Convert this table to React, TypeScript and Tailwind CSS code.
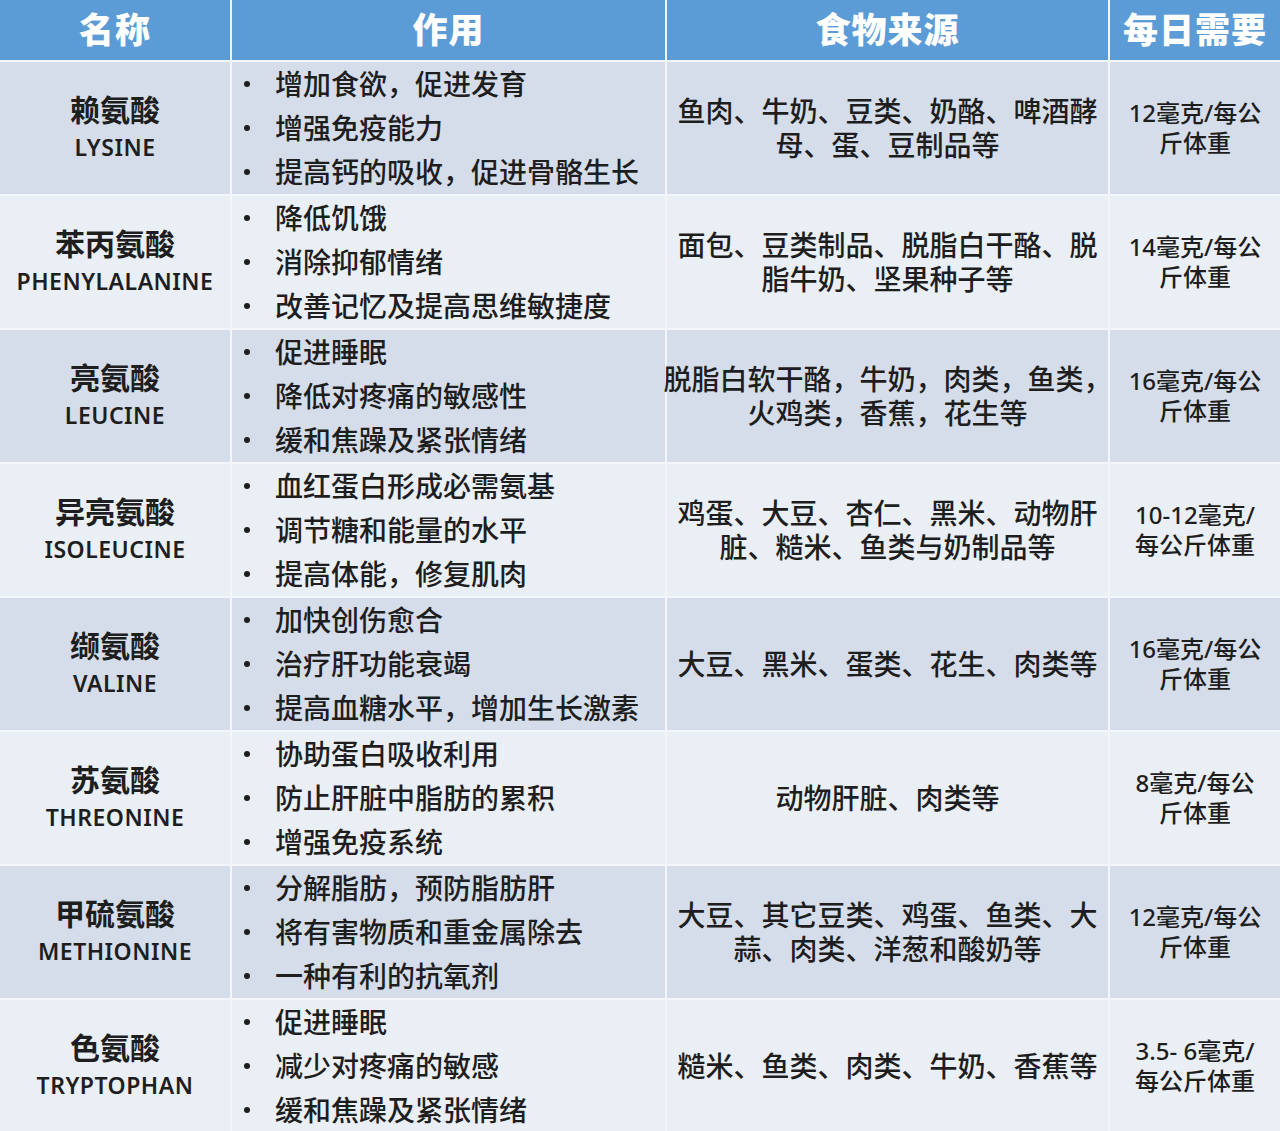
import React from 'react';

interface AminoRow {
  cn: string;
  en: string;
  effects: string[];
  food: string[];
  daily: string[];
}

const rows: AminoRow[] = [
  {
    cn: '赖氨酸',
    en: 'LYSINE',
    effects: ['增加食欲，促进发育', '增强免疫能力', '提高钙的吸收，促进骨骼生长'],
    food: ['鱼肉、牛奶、豆类、奶酪、啤酒酵', '母、蛋、豆制品等'],
    daily: ['12毫克/每公', '斤体重'],
  },
  {
    cn: '苯丙氨酸',
    en: 'PHENYLALANINE',
    effects: ['降低饥饿', '消除抑郁情绪', '改善记忆及提高思维敏捷度'],
    food: ['面包、豆类制品、脱脂白干酪、脱', '脂牛奶、坚果种子等'],
    daily: ['14毫克/每公', '斤体重'],
  },
  {
    cn: '亮氨酸',
    en: 'LEUCINE',
    effects: ['促进睡眠', '降低对疼痛的敏感性', '缓和焦躁及紧张情绪'],
    food: ['脱脂白软干酪，牛奶，肉类，鱼类，', '火鸡类，香蕉，花生等'],
    daily: ['16毫克/每公', '斤体重'],
  },
  {
    cn: '异亮氨酸',
    en: 'ISOLEUCINE',
    effects: ['血红蛋白形成必需氨基', '调节糖和能量的水平', '提高体能，修复肌肉'],
    food: ['鸡蛋、大豆、杏仁、黑米、动物肝', '脏、糙米、鱼类与奶制品等'],
    daily: ['10-12毫克/', '每公斤体重'],
  },
  {
    cn: '缬氨酸',
    en: 'VALINE',
    effects: ['加快创伤愈合', '治疗肝功能衰竭', '提高血糖水平，增加生长激素'],
    food: ['大豆、黑米、蛋类、花生、肉类等'],
    daily: ['16毫克/每公', '斤体重'],
  },
  {
    cn: '苏氨酸',
    en: 'THREONINE',
    effects: ['协助蛋白吸收利用', '防止肝脏中脂肪的累积', '增强免疫系统'],
    food: ['动物肝脏、肉类等'],
    daily: ['8毫克/每公', '斤体重'],
  },
  {
    cn: '甲硫氨酸',
    en: 'METHIONINE',
    effects: ['分解脂肪，预防脂肪肝', '将有害物质和重金属除去', '一种有利的抗氧剂'],
    food: ['大豆、其它豆类、鸡蛋、鱼类、大', '蒜、肉类、洋葱和酸奶等'],
    daily: ['12毫克/每公', '斤体重'],
  },
  {
    cn: '色氨酸',
    en: 'TRYPTOPHAN',
    effects: ['促进睡眠', '减少对疼痛的敏感', '缓和焦躁及紧张情绪'],
    food: ['糙米、鱼类、肉类、牛奶、香蕉等'],
    daily: ['3.5- 6毫克/', '每公斤体重'],
  },
];

const headers = ['名称', '作用', '食物来源', '每日需要'];

export default function App() {
  return (
    <div className="w-[1280px] h-[1131px] overflow-hidden bg-[#f2f5fa] font-['Noto_Sans','Noto_Sans_CJK_SC',sans-serif] text-[#1e1e1e]">
      <div className="grid grid-cols-[230px_433px_441px_170px] gap-x-[2px] gap-y-[2px]">
        {/* header */}
        {headers.map((h) => (
          <div
            key={h}
            className="h-[60px] bg-[#5b9bd6] flex items-center justify-center text-white text-[35px] font-black tracking-[1px]"
          >
            {h}
          </div>
        ))}

        {rows.map((r, i) => {
          const bg = i % 2 === 0 ? 'bg-[#d5ddea]' : 'bg-[#eaeef5]';
          return (
            <React.Fragment key={r.en}>
              {/* name */}
              <div className={`${bg} h-[132px] flex flex-col items-center justify-center`}>
                <div className="text-[30px] leading-[38px] font-bold">{r.cn}</div>
                <div className="text-[23px] leading-[36px] font-semibold tracking-[0.5px]">{r.en}</div>
              </div>

              {/* effects */}
              <div className={`${bg} h-[132px] flex flex-col justify-center pl-[10px]`}>
                {r.effects.map((e) => (
                  <div key={e} className="flex items-center h-[44px] whitespace-nowrap">
                    <span className="w-[6px] h-[6px] rounded-full bg-[#1e1e1e] mr-[25px] ml-[2px]" />
                    <span className="text-[28px] leading-[34px] font-medium">{e}</span>
                  </div>
                ))}
              </div>

              {/* food */}
              <div className={`${bg} h-[132px] flex flex-col items-center justify-center`}>
                {r.food.map((f) => (
                  <div key={f} className="text-[28px] leading-[34px] font-medium whitespace-nowrap">
                    {f}
                  </div>
                ))}
              </div>

              {/* daily */}
              <div className={`${bg} h-[132px] flex flex-col items-center justify-center`}>
                {r.daily.map((d) => (
                  <div key={d} className="text-[24px] leading-[30px] font-medium whitespace-nowrap">
                    {d}
                  </div>
                ))}
              </div>
            </React.Fragment>
          );
        })}
      </div>
    </div>
  );
}
